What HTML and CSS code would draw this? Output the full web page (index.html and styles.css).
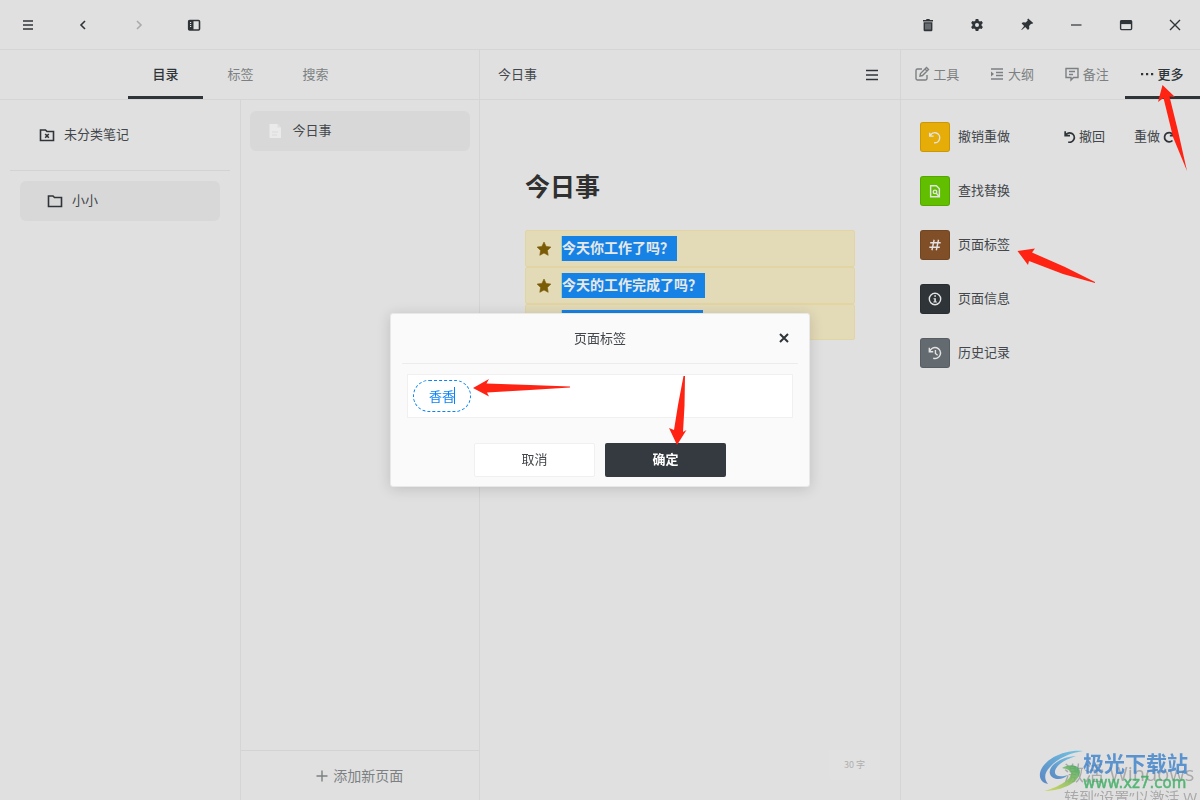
FILE: index.html
```html
<!DOCTYPE html>
<html lang="zh-CN">
<head>
<meta charset="utf-8">
<title>今日事</title>
<link rel="stylesheet" href="styles.css">
</head>
<body>
<div class="app">
  <header class="topbar">
    <div class="topbar-group topbar-left">
      <button class="icon-btn" aria-label="菜单"><svg viewBox="0 0 16 16"><path d="M3 4h10M3 8h10M3 12h10" class="line"/></svg></button>
      <button class="icon-btn" aria-label="后退"><svg viewBox="0 0 16 16"><path d="M10 4 6 8l4 4" class="line"/></svg></button>
      <button class="icon-btn faded" aria-label="前进"><svg viewBox="0 0 16 16"><path d="M6 4l4 4-4 4" class="line"/></svg></button>
      <button class="icon-btn" aria-label="侧栏"><svg viewBox="0 0 16 16"><rect x="2.700" y="3.500" width="10.800" height="9.500" rx="1" class="line"/><path d="M2.500 3.500h5v9.500h-5z" fill="currentColor"/><path d="M4 5.500h1.200M4 7.500h1.200M4 9.500h1.200" stroke="#e0e0e0" stroke-width="1"/></svg></button>
    </div>
    <div class="topbar-group topbar-right">
      <button class="icon-btn" aria-label="删除"><svg viewBox="0 0 16 16"><path d="M3 3h3l.6-1h2.800l.6 1h3v1.500H3zM3.600 5.300h8.800V13a1.200 1.200 0 0 1-1.200 1.200H4.800A1.200 1.200 0 0 1 3.600 13z" fill="currentColor"/><path d="M6 6.500v6M8 6.500v6M10 6.500v6" stroke="#b0b2b4" stroke-width=".9"/></svg></button>
      <button class="icon-btn" aria-label="设置"><svg viewBox="0 0 16 16"><path fill-rule="evenodd" fill="currentColor" d="M6.700 2h2.600l.4 1.700 1.200.7 1.700-.5 1.300 2.200L12.600 7.300v1.400l1.300 1.200-1.300 2.200-1.700-.5-1.200.7-.4 1.700H6.700l-.4-1.700-1.200-.7-1.700.5-1.300-2.200 1.300-1.200V7.300L2.100 6.100l1.300-2.200 1.700.5 1.200-.7zM8 6a2 2 0 1 0 0 4 2 2 0 0 0 0-4z"/></svg></button>
      <button class="icon-btn" aria-label="置顶"><svg viewBox="0 0 16 16"><path fill="currentColor" d="M9.200 1.500l5 4.600-1.200 1-.9-.3-2 2.300.2 2.500-1.300 1.300-2.800-2.800L2.800 13l-.5-.3 2.800-3.600L2.600 6.400l1.300-1.100 2.800.3L8.700 3.600l-.4-1z"/></svg></button>
      <button class="icon-btn" aria-label="最小化"><svg viewBox="0 0 16 16"><path d="M3 8h10.500" stroke="currentColor" stroke-width="1.200"/></svg></button>
      <button class="icon-btn" aria-label="最大化"><svg viewBox="0 0 16 16"><rect x="2.600" y="3.600" width="11" height="9" rx="1" class="thin"/><path d="M2.500 3.500h11.200v3.600H2.500z" fill="currentColor"/></svg></button>
      <button class="icon-btn" aria-label="关闭"><svg viewBox="0 0 16 16"><path d="M3 3l10 10M13 3L3 13" class="thin"/></svg></button>
    </div>
  </header>

  <div class="columns">
    <section class="nav">
      <nav class="tabs tabs-nav">
        <button class="tab active">目录</button>
        <button class="tab">标签</button>
        <button class="tab">搜索</button>
      </nav>
      <div class="nav-body">
        <div class="folders">
          <div class="folder-top">
            <button class="folder">
              <svg viewBox="0 0 16 16"><path d="M1.500 3h5l1.500 1.500h6.500v9h-13z" class="line"/><path d="M6.200 7l3.600 3.800M9.800 7l-3.600 3.800" class="line"/></svg>
              <span>未分类笔记</span>
            </button>
          </div>
          <button class="folder selected">
            <svg viewBox="0 0 16 16"><path d="M1.500 3h4.500l1.500 1.500h7v9h-13z" class="line"/></svg>
            <span>小小</span>
          </button>
        </div>
        <div class="pages">
          <div class="page-list">
            <button class="page">
              <svg viewBox="0 0 16 16"><path d="M2.500 1h8l3.500 3.500V15H2.500z" fill="#eaeaea"/><path d="M10.500 1v3.500H14" fill="#dedede"/><path d="M5 9h6M5 12h5" stroke="#dadada"/></svg>
              <span>今日事</span>
            </button>
          </div>
          <button class="add-page">
            <svg viewBox="0 0 16 16"><path d="M8 2.500v11M2.500 8h11" class="thin"/></svg>
            <span>添加新页面</span>
          </button>
        </div>
      </div>
    </section>

    <main class="editor">
      <div class="editor-head">
        <span>今日事</span>
        <button class="icon-btn" aria-label="页面菜单"><svg viewBox="0 0 16 16"><path d="M2 3.500h12M2 8h12M2 12.500h12" class="line"/></svg></button>
      </div>
      <article class="doc">
        <h1>今日事</h1>
        <ul class="notes">
          <li><svg viewBox="0 0 16 16"><path class="star" d="M8 1l2.100 4.400 4.800.7-3.500 3.400.8 4.800L8 12l-4.200 2.300.8-4.800L1.100 6.100l4.800-.7z"/></svg><mark>今天你工作了吗<span class="punct">？</span></mark></li>
          <li><svg viewBox="0 0 16 16"><path class="star" d="M8 1l2.100 4.400 4.800.7-3.500 3.400.8 4.800L8 12l-4.200 2.300.8-4.800L1.100 6.100l4.800-.7z"/></svg><mark>今天的工作完成了吗<span class="punct">？</span></mark></li>
          <li><svg viewBox="0 0 16 16"></svg><mark class="blank"></mark></li>
        </ul>
      </article>
      <span class="count">30 字</span>
    </main>

    <aside class="side">
      <nav class="tabs">
        <button class="tab"><svg viewBox="0 0 16 16"><path class="thin" d="M8 3H3.500A1.500 1.500 0 0 0 2 4.500v8A1.500 1.500 0 0 0 3.500 14h8a1.500 1.500 0 0 0 1.500-1.500V9M6 10l.5-2.500 6-6L14.500 3.500l-6 6zM11 3l2 2"/></svg>工具</button>
        <button class="tab"><svg viewBox="0 0 16 16"><path class="thin" d="M2 3h12M7 6.500h7M7 9.500h7M2 13h12"/><path d="M2 5.500v5L5 8z" fill="currentColor"/></svg>大纲</button>
        <button class="tab"><svg viewBox="0 0 16 16"><path class="thin" d="M2 2.500h12v9H9.500L7 14v-2.500H2zM5 5.500h6M5 8.500h4"/></svg>备注</button>
        <button class="tab active"><svg viewBox="0 0 16 16"><path d="M2 7h2.200v2.200H2zM7 7h2.200v2.200H7zM12 7h2.200v2.200H12z" fill="currentColor"/></svg>更多</button>
      </nav>
      <div class="tools">
        <div class="tool">
          <span class="badge yellow"><svg viewBox="0 0 16 16"><path class="line" d="M2 3v4h4.500M2.500 6.500a5.700 5.700 0 1 1 4.500 8"/></svg></span>
          <span class="label">撤销重做</span>
          <div class="undo">
            <button><svg viewBox="0 0 16 16"><path class="heavy" d="M2.500 1.500v5H8M3 6a5.300 5.300 0 1 1 3 7.700"/></svg><span class="label">撤回</span></button>
            <button><span class="label">重做</span><svg viewBox="0 0 16 16"><path class="heavy" d="M13.500 1.500v5H9M13 6a5.300 5.300 0 1 0-1 6"/></svg></button>
          </div>
        </div>
        <button class="tool"><span class="badge green"><svg viewBox="0 0 16 16"><path class="line" d="M3 2h6.500l3.500 3.500v9H3z"/><circle cx="8" cy="9" r="2" class="line"/><path class="line" d="M9.500 10.500l3 3.500"/></svg></span><span class="label">查找替换</span></button>
        <button class="tool"><span class="badge brown"><svg viewBox="0 0 16 16"><path class="line" d="M7 2L4.500 14M12 2L9.500 14M2.500 5.500h12M1.500 10.500h12"/></svg></span><span class="label">页面标签</span></button>
        <button class="tool"><span class="badge dark"><svg viewBox="0 0 16 16"><circle cx="8" cy="8" r="6.500" class="line"/><path d="M7.200 3.800h1.900v1.700H7.200zM6.300 7H9v3.900h1.200v1.200H6.100v-1.200h1.100V8.200h-.9z" fill="currentColor"/></svg></span><span class="label">页面信息</span></button>
        <button class="tool"><span class="badge gray"><svg viewBox="0 0 16 16"><path class="line" d="M1.500 2v4.500H6M2 6a6.300 6.300 0 1 1 4 8M8.500 4.500v4l2.500 2"/></svg></span><span class="label">历史记录</span></button>
      </div>
    </aside>
  </div>
</div>

<div class="overlay">
  <form class="dialog" role="dialog" aria-labelledby="dlg-title">
    <div class="dialog-head">
      <h2 id="dlg-title">页面标签</h2>
      <button type="button" class="close" aria-label="关闭"><svg viewBox="0 0 16 16"><path d="M4 4l8 8M12 4l-8 8" class="heavy"/></svg></button>
    </div>
    <div class="tag-box"><label class="pill"><input type="text" value="香香" aria-label="标签"></label></div>
    <div class="actions">
      <button type="button" class="cancel">取消</button>
      <button type="button" class="ok">确定</button>
    </div>
  </form>
</div>

<div class="activate"><div class="activate-title">激活 Windows</div><div class="activate-text">转到“设置”以激活 W</div></div>
<div class="brand">
  <svg viewBox="0 0 44 42">
    <defs><linearGradient id="b" x1="1" y1="0" x2="0" y2="1"><stop offset="0" stop-color="#62c0e4"/><stop offset="1" stop-color="#4176bd"/></linearGradient><linearGradient id="g" x1="1" y1="0" x2="0" y2="1"><stop offset="0" stop-color="#45a866"/><stop offset="1" stop-color="#d2d54c"/></linearGradient></defs>
    <path fill="url(#b)" d="M44 1C26-1 4 9 1 23c-1 7 3 10 8 11-4-5-4-11 2-17C19 8 31 3 44 1z"/>
    <path fill="url(#b)" d="M37 6C21 7 9 16 11 24c2 6 12 7 18 1-6 2-12 2-13-2-1-6 8-13 21-17z"/>
    <path fill="url(#g)" d="M23 18c8-5 18-3 18 4 0 9-16 19-36 19 12-3 26-10 27-17 0-4-4-5-9-6z"/>
  </svg>
  <div><div class="brand-name">极光下载站</div><div class="brand-url">www.xz7.com</div></div>
</div>

<svg class="arrows" viewBox="0 0 1200 800" aria-hidden="true">
  <path d="M1162.500 85L1175 97l-5.500-.5 8.500 34.500 9 40-14-34-9.500-39-5.500 4z"/>
  <path d="M1017.500 251l17.500-2.500-3 4 33 14.500 30 15v1l-32-9-34-13-1 4z"/>
  <path d="M473 388l16-9-2.500 4.500 43.500 1.500 40 1.500v1l-40 2.500-43 2.500 2 4z"/>
  <path d="M677 445l-8-17 5 2 4-25 5.500-29h1.500l-.5 30-1.500 26 3.500-2z"/>
</svg>
</body>
</html>
```
FILE: styles.css
```css
* { box-sizing: border-box; }
body {
  margin: 0;
  font: 13px/20px "Noto Sans CJK SC", sans-serif;
  color: #2f3439;
  background: #e0e0e0;
  overflow: hidden;
}
button {
  font: inherit;
  color: inherit;
  background: none;
  border: 0;
  padding: 0;
  text-align: left;
}
svg { width: 16px; height: 16px; flex: none; display: block; }
.line, .thin, .heavy { fill: none; stroke: currentColor; stroke-width: 1.6; }
.thin { stroke-width: 1.4; }
.heavy { stroke-width: 2; }

.app { height: 100vh; display: flex; flex-direction: column; }
.topbar {
  display: flex;
  justify-content: space-between;
  height: 50px;
  padding: 0 17px 0 20px;
  border-bottom: 1px solid #d5d5d5;
}
.topbar-group { display: flex; align-items: center; justify-content: space-between; }
.topbar-left { width: 182px; }
.topbar-right { width: 263px; }
.faded { color: #a9abac; }

.columns { flex: 1; display: grid; grid-template-columns: 40% 1fr 25%; min-height: 0; }
.nav { display: flex; flex-direction: column; border-right: 1px solid #d5d5d5; min-height: 0; }
.tabs { display: flex; flex: none; height: 50px; border-bottom: 1px solid #d5d5d5; }
.tabs-nav { justify-content: center; padding-left: 2px; }
.tab {
  display: flex;
  align-items: center;
  justify-content: center;
  gap: 3px;
  width: 75px;
  border-top: 1px solid transparent;
  border-bottom: 3px solid transparent;
  color: #7c8082;
}
.tab.active { color: #2f3439; font-weight: 500; border-bottom-color: #2f3439; }

.nav-body { flex: 1; display: grid; grid-template-columns: 1fr 1fr; min-height: 0; }
.folders { padding: 0 20px; }
.folder-top { margin: 0 -10px 10px; padding: 15px 10px; border-bottom: 1px solid #d3d3d3; }
.folder { display: flex; align-items: center; gap: 9px; width: 100%; height: 40px; padding-left: 19px; }
.folder.selected { background: #d8d8d8; border-radius: 6px; padding-left: 27px; }
.folder span, .page span, .add-page span, .editor-head span, .label { padding-bottom: 2px; color: #43474b; }
.pages { display: flex; flex-direction: column; border-left: 1px solid #d5d5d5; }
.page-list { flex: 1; padding: 11px 9px; }
.page {
  display: flex;
  align-items: center;
  gap: 10px;
  width: 100%;
  height: 40px;
  padding-left: 17px;
  background: #d8d8d8;
  border-radius: 6px;
}
.add-page {
  display: flex;
  align-items: center;
  justify-content: center;
  gap: 3px;
  height: 50px;
  padding-right: 2px;
  border-top: 1px solid #d3d3d3;
  font-size: 14px;
  color: #7c8082;
}
.add-page span { color: #7c8082; }

.editor { display: flex; flex-direction: column; min-width: 0; }
.editor-head {
  display: flex;
  align-items: center;
  justify-content: space-between;
  height: 50px;
  padding: 0 20px 0 18px;
  border-bottom: 1px solid #d5d5d5;
}
.doc { flex: 1; padding: 65px 45px; }
h1 { margin: 0 0 25px; font-size: 25px; line-height: 40px; font-weight: 700; color: #303030; }
.notes { margin: 0; padding: 0; list-style: none; }
.notes li {
  display: flex;
  align-items: center;
  gap: 9px;
  height: 37px;
  padding: 0 10px;
  background: #e3dab8;
  border: 1px solid #e3d5a3;
  border-radius: 2px;
}
.notes li:last-child { height: 36px; }
.star { fill: #7a5b06; stroke: #7a5b06; stroke-width: .6; stroke-linejoin: round; }
mark {
  height: 25px;
  padding-right: 3px;
  border-left: 1px solid #abcfb7;
  background: #1782e6;
  color: #e6e9e6;
  font-size: 14px;
  line-height: 23px;
  font-weight: 700;
}
.punct { font-family: "Noto Sans CJK TC", sans-serif; }
.blank { width: 142px; }
.count {
  align-self: flex-end;
  margin: 0 20px 20px;
  padding: 0 15px;
  border-radius: 4px;
  background: #e1e1e1;
  color: #afafaf;
  font-size: 9px;
  line-height: 30px;
}

.side { border-left: 1px solid #d5d5d5; min-width: 0; }
.side .tab { flex: 1; padding-right: 3px; }
.tools { display: flex; flex-direction: column; gap: 24px; padding: 22px 20px 22px 19px; }
.tool { display: flex; align-items: center; gap: 8px; height: 30px; }
.badge {
  display: grid;
  place-items: center;
  width: 30px;
  height: 30px;
  border-radius: 3px;
  border: 1px solid rgba(0, 0, 0, .12);
  color: #e3e3e3;
}
.badge svg { width: 14px; height: 14px; }
.yellow { background: #e6ad08; }
.green { background: #61bf00; }
.brown { background: #804f27; }
.dark { background: #2f3439; }
.gray { background: #636a70; }
.undo { display: flex; gap: 29px; margin-left: auto; padding-right: 4px; }
.undo button { display: flex; align-items: center; gap: 2px; }
.undo svg { width: 14px; height: 14px; }

.overlay { position: fixed; inset: 0; display: grid; place-items: center; }
.dialog {
  width: 420px;
  padding: 0 11px 9px;
  background: #fafafa;
  border: 1px solid #e8e8e8;
  border-radius: 3px;
  box-shadow: 0 2px 14px rgba(0, 0, 0, .15);
}
.dialog-head {
  display: grid;
  grid-template-columns: 16px 1fr 16px;
  align-items: center;
  height: 50px;
  padding: 0 6px 2px;
  border-bottom: 1px solid #ececec;
}
h2 { grid-column: 2; margin: 0; font-size: 13px; font-weight: 400; text-align: center; color: #43474b; }
.tag-box { margin: 10px 5px 25px; padding: 5px; height: 44px; background: #fff; border: 1px solid #f0f0f0; }
.pill {
  display: inline-flex;
  align-items: center;
  height: 32px;
  padding: 0 15px 2px;
  border: 1px dashed #0a84f5;
  border-radius: 16px;
}
.pill input {
  width: 26px;
  height: 17px;
  padding: 0;
  border: 0;
  border-right: 1px solid #0a84f5;
  border-radius: 0;
  background: none;
  color: #0a84f5;
  font: 13px/17px "Noto Sans CJK SC", sans-serif;
}
.actions { display: flex; justify-content: center; gap: 10px; }
.actions button { width: 121px; height: 34px; padding-bottom: 2px; border-radius: 2px; text-align: center; }
.cancel { background: #fff; border: 1px solid #f0f0f0; color: #43474b; }
.actions .ok { background: #353940; color: #fff; font-weight: 700; }

.activate {
  position: fixed;
  right: 0;
  bottom: 0;
  width: 136px;
  height: 38px;
  overflow: hidden;
  white-space: nowrap;
  color: #a9a9a9;
  font-family: "Open Sans", "Noto Sans CJK SC", sans-serif;
}
.activate-title { font-size: 20px; line-height: 24px; }
.activate-text { font-size: 15px; line-height: 22px; }
.brand { position: fixed; right: 12px; bottom: 8px; display: flex; align-items: center; opacity: .85; white-space: nowrap; }
.brand svg { width: 44px; height: 42px; }
.brand-name { font-size: 21px; line-height: 24px; font-weight: 700; color: #4385cc; }
.brand-url { font: 15px/18px "DejaVu Sans", sans-serif; color: #3cae62; -webkit-text-stroke: 0.5px #3cae62; }
.arrows { position: fixed; inset: 0; width: 100%; height: 100%; fill: #ff2314; pointer-events: none; }
```
